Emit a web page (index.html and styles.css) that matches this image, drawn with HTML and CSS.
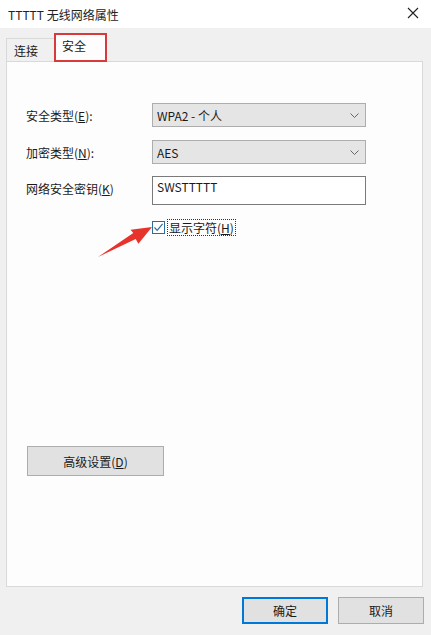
FILE: index.html
```html
<!DOCTYPE html>
<html lang="zh">
<head>
<meta charset="utf-8">
<link rel="stylesheet" href="styles.css">
</head>
<body>
<div class="window">
  <div class="titlebar">
    <span class="title">TTTTT 无线网络属性</span>
    <svg class="close" width="12" height="12" viewBox="0 0 12 12"><path d="M1 1 L11 11 M11 1 L1 11" stroke="#222" stroke-width="1.1" fill="none"/></svg>
  </div>
  <div class="body">
    <div class="tabs">
      <div class="tab">连接</div>
      <div class="tab active">安全</div>
    </div>
    <div class="panel">
      <div class="form">
        <div class="row">
          <label class="lbl">安全类型(<u>E</u>):</label>
          <div class="select"><span>WPA2 - 个人</span><svg width="9" height="5" viewBox="0 0 9 5"><path d="M0.5 0.5 L4.5 4.5 L8.5 0.5" stroke="#666" fill="none"/></svg></div>
        </div>
        <div class="row">
          <label class="lbl">加密类型(<u>N</u>):</label>
          <div class="select"><span>AES</span><svg width="9" height="5" viewBox="0 0 9 5"><path d="M0.5 0.5 L4.5 4.5 L8.5 0.5" stroke="#666" fill="none"/></svg></div>
        </div>
        <div class="row">
          <label class="lbl">网络安全密钥(<u>K</u>)</label>
          <div class="input">SWSTTTTT</div>
        </div>
        <div class="row check-row">
          <span class="lbl"></span>
          <div class="check">
            <span class="box"><svg width="11" height="11" viewBox="0 0 11 11"><path d="M1.5 5.5 L4.2 8.3 L9.6 1.8" stroke="#2b6d9e" stroke-width="1.2" fill="none"/></svg></span>
            <span class="check-text">显示字符(<u>H</u>)</span>
          </div>
        </div>
      </div>
      <div class="adv-wrap">
        <div class="btn adv">高级设置(<u>D</u>)</div>
      </div>
      <svg class="arrow" width="70" height="40" viewBox="0 0 70 40"><path d="M2 36 L39.7 17.9 L42.4 22.7 L56 6 L34.6 8.7 L37.3 11.9 Z" fill="#e8322c"/></svg>
    </div>
    <div class="footer">
      <div class="btn ok">确定</div>
      <div class="btn">取消</div>
    </div>
  </div>
</div>
</body>
</html>
```
FILE: styles.css
```css
* { box-sizing: border-box; }
html, body { margin: 0; padding: 0; }
body {
  width: 431px;
  height: 635px;
  background: #f0f0f0;
  font-family: "Noto Sans CJK SC", "Microsoft YaHei", sans-serif;
  font-size: 12px;
  color: #1a1a1a;
  overflow: hidden;
}
u { text-decoration: underline; text-underline-offset: 1px; }
.window { display: flex; flex-direction: column; height: 635px; }
.titlebar {
  height: 28px;
  background: #ffffff;
  display: flex;
  align-items: center;
  justify-content: space-between;
  padding: 0 12px 0 8px;
}
.title { font-size: 12px; color: #222; }
.close { margin-top: -2px; }
.body { flex: 1; display: flex; flex-direction: column; padding: 0 8px 0 6px; }
.tabs { display: flex; align-items: flex-end; height: 33px; margin-top: 0; }
.tab {
  height: 24px;
  padding: 0 8px 0 7px;
  display: flex;
  align-items: center;
  border: 1px solid #d9d9d9;
  border-bottom: none;
  background: #f0f0f0;
  margin-bottom: -1px;
  margin-right: 0;
}
.tab:first-child { padding-bottom: 0; margin-top: 5px; width: 48px; border-right: none; }
.tab.active {
  height: 29px;
  width: 53px;
  background: #fdfdfd;
  border: 2px solid #d8393a;
  padding: 0 0 4px 6px;
  position: relative;
  z-index: 2;
}
.panel {
  position: relative;
  height: 526px;
  background: #fdfdfd;
  border: 1px solid #d9d9d9;
  padding: 41px 0 0 19px;
  display: flex;
  flex-direction: column;
}
.form { display: flex; flex-direction: column; gap: 13px; }
.row { display: flex; align-items: center; }
.lbl { width: 126px; flex: none; }
.select {
  width: 214px;
  height: 24px;
  background: #e5e5e5;
  border: 1px solid #adadad;
  display: flex;
  align-items: center;
  justify-content: space-between;
  padding: 0 6px 0 4px;
}
.input {
  width: 214px;
  height: 29px;
  background: #fff;
  border: 1px solid #7a7a7a;
  padding: 2px 4px;
  line-height: 16px;
  align-self: flex-start;
}
.row:nth-child(3) { margin-top: -1px; }
.row:nth-child(3) .lbl { align-self: flex-start; padding-top: 4px; }
.check-row { margin-top: 2px; }
.check { display: flex; align-items: center; gap: 3px; }
.box {
  width: 13px; height: 13px;
  border: 1px solid #2b6d9e;
  background: #fff;
  display: flex; align-items: center; justify-content: center;
}
.check-text { outline: 1px dotted #333; outline-offset: 0; padding: 0 1px; line-height: 15px; }
.adv-wrap { margin-top: 211px; margin-left: 1px; }
.btn {
  width: 86px;
  height: 27px;
  background: #e1e1e1;
  border: 1px solid #adadad;
  display: flex;
  align-items: center;
  justify-content: center;
}
.adv { width: 137px; height: 30px; }
.arrow { position: absolute; left: 89px; top: 159px; }
.footer { display: flex; justify-content: flex-end; gap: 10px; padding-top: 10px; margin-right: -1px; }
.ok { border: 2px solid #0078d7; }
```
